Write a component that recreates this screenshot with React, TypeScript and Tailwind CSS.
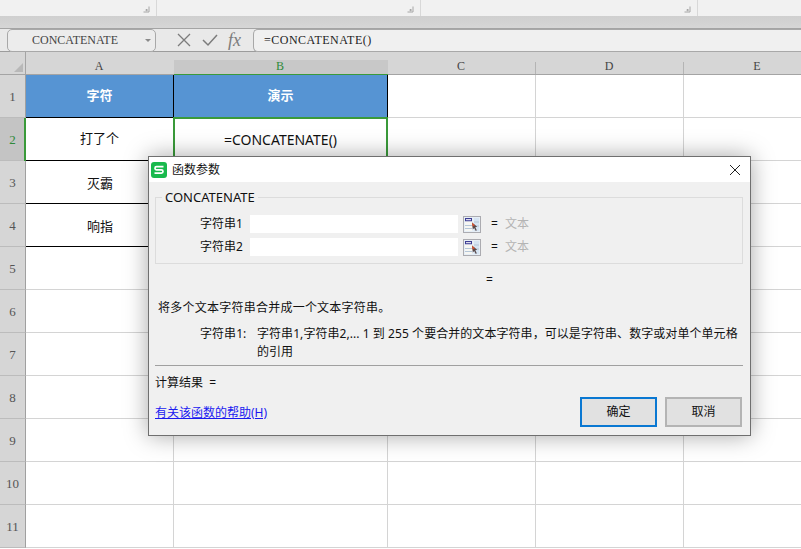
import React from "react";

const FONT = "font-['Noto_Sans','Noto_Sans_CJK_SC',sans-serif]";
const HEAD = "font-['Liberation_Serif','Noto_Sans_CJK_SC',serif]";

const columns = ["A", "B", "C", "D", "E"];
const rows = [1, 2, 3, 4, 5, 6, 7, 8, 9, 10, 11];

const CornerMark = () => (
  <svg width="7" height="7" viewBox="0 0 7 7" className="mb-[3px] mr-[6px]">
    <path d="M6 0.5V6H0.5M3 3.5h1.2v1.2H3z" fill="none" stroke="#a6a6a6" strokeWidth="1" />
  </svg>
);

const PickerIcon = () => (
  <svg width="18" height="17" viewBox="0 0 18 17">
    <rect x="0.5" y="0.5" width="17" height="16" fill="#e6eef6" stroke="#ababb0" />
    <path d="M11 2h5v13h-5z" fill="#d5e4f3" />
    <rect x="2" y="2" width="7" height="3.5" fill="#3d3d94" />
    <rect x="3" y="3.2" width="5" height="1" fill="#ffffff" />
    <path d="M2 5.5h7v9.5H2z" fill="#f6f6f2" />
    <path d="M2 9.5h7M2 12.5h7M11 6h5M11 10h5" stroke="#b4c6d8" strokeWidth="1" />
    <path d="M9 6.5l.8 7 1.4-1.6 1.6 3 1-.6-1.5-3 1.9-.5z" fill="#5a4a4a" />
    <path d="M9 6.5l.5 4 2.5-1.3z" fill="#d8512f" />
  </svg>
);

const ArgRow = ({ label }: { label: string }) => (
  <div className="flex h-[18px] items-center">
    <div className="w-[94px] pl-[44px] text-[12px] leading-none text-[#111]">{label}</div>
    <div className="h-[18px] w-[208px] bg-white" />
    <div className="ml-[5px] flex h-[18px] w-[18px] items-center"><PickerIcon /></div>
    <div className="ml-[10px] w-[14px] text-[12px] leading-none text-[#111]">=</div>
    <div className="text-[12px] leading-none text-[#b4b4b4]">文本</div>
  </div>
);

const Dialog = () => (
  <div className={`absolute left-[148px] top-[156px] h-[280px] w-[603px] border border-[#6f6f6f] bg-[#f0f0f0] shadow-[0_0_22px_rgba(0,0,0,0.35)] ${FONT}`}>
    <div className="flex h-[25px] items-center justify-between bg-white pl-[2px] pr-[9px]">
      <div className="flex items-center gap-[5px]">
        <svg width="16" height="16" viewBox="0 0 16 16">
          <rect width="16" height="16" rx="3" fill="#19b94d" />
          <path d="M12.5 4.7H5.6a1.6 1.6 0 0 0 0 3.2h4.8a1.6 1.6 0 0 1 0 3.2H3.5" fill="none" stroke="#fff" strokeWidth="1.7" />
        </svg>
        <span className="text-[12px] leading-none text-[#111]">函数参数</span>
      </div>
      <svg width="12" height="12" viewBox="0 0 12 12">
        <path d="M1 1l10 10M11 1L1 11" stroke="#222" strokeWidth="1" />
      </svg>
    </div>

    <div className="px-[6px]">
      <div className="relative mt-[15px] h-[67px] w-[588px] border border-[#dcdcdc] pt-[17px]">
        <span className="absolute left-[6px] top-[-8px] bg-[#f0f0f0] px-[3px] text-[13px] leading-[14px] text-[#111]">CONCATENATE</span>
        <div className="flex flex-col gap-[5px]">
          <ArgRow label="字符串1" />
          <ArgRow label="字符串2" />
        </div>
      </div>

      <div className="mt-[9px] pl-[331px] text-[12px] leading-[14px] text-[#111]">=</div>
      <div className="mt-[14px] pl-[3px] text-[12px] leading-[14px] tracking-[0.02em] text-[#111]">将多个文本字符串合并成一个文本字符串。</div>

      <div className="mt-[10px] flex text-[12px] leading-[18px] tracking-[0.06px] text-[#111]">
        <div className="w-[102px] shrink-0 pl-[45px]">字符串1:</div>
        <div className="w-[484px]">字符串1,字符串2,... 1 到 255 个要合并的文本字符串，可以是字符串、数字或对单个单元格的引用</div>
      </div>

      <div className="mt-[4px] h-px w-[588px] bg-[#a0a0a0]" />
      <div className="mt-[10px] text-[12px] leading-[14px] text-[#111]">计算结果 &nbsp;=</div>

      <div className="mt-[7px] flex w-[587px] items-center justify-between">
        <a className="mt-[1px] text-[12px] leading-[14px] text-[#1a1af0] underline">有关该函数的帮助(H)</a>
        <div className="flex gap-[8px]">
          <div className="flex h-[30px] w-[77px] items-center justify-center border-2 border-[#0a78d2] bg-[#e1e1e1] text-[12px] text-[#111]">确定</div>
          <div className="flex h-[30px] w-[77px] items-center justify-center border-2 border-[#b4b4b4] bg-[#e1e1e1] text-[12px] text-[#111]">取消</div>
        </div>
      </div>
    </div>
  </div>
);

const cellText: Record<string, string> = {
  A1: "字符",
  B1: "演示",
  A2: "打了个",
  A3: "灭霸",
  A4: "响指",
  B2: "=CONCATENATE()",
};

const cellClass = (col: string, row: number) => {
  if (row === 1 && (col === "A" || col === "B")) {
    return "bg-[#5694d3] font-bold text-white border-b border-r border-black";
  }
  if (col === "B" && row === 2) return "bg-white border-2 border-[#3a9a3a] -mt-px -ml-px relative text-[14px] text-[#111]";
  if (col === "A" && row === 2) return "bg-white border-b border-r border-black text-[#111] shadow-[-2px_0_0_#3a9a3a]";
  if (col === "A" && (row === 3 || row === 4)) return "bg-white border-b border-black pt-[3px] text-[#111]";
  return "bg-white border-b border-r border-[#d4d4d4]";
};

export default function App() {
  return (
    <div className={`relative h-[549px] w-[801px] overflow-hidden bg-white ${FONT}`}>
      <div className="flex h-[16px] bg-[#f1f1f1]">
        <div className="flex w-[157px] items-end justify-end border-r border-[#d8d8d8]"><CornerMark /></div>
        <div className="flex w-[264px] items-end justify-end border-r border-[#d8d8d8]"><CornerMark /></div>
        <div className="flex w-[277px] items-end justify-end border-r border-[#d8d8d8]"><CornerMark /></div>
      </div>
      <div className="h-[13px] border-b border-[#a4a4a4] bg-gradient-to-b from-[#cfcfcf] to-[#d6d6d6]" />

      <div className="flex h-[23px] items-center border-b border-[#9c9c9c] bg-[#e9e9e9] pl-[7px]">
        <div className={`relative flex h-[23px] w-[149px] items-center rounded-[5px] border border-[#a8a8a8] bg-[#ececec] pl-[24px] text-[12px] text-[#444] ${HEAD}`}>
          CONCATENATE
          <span className="absolute right-[4px] top-[9px] h-0 w-0 border-x-[3px] border-t-[3px] border-x-transparent border-t-[#8a8a8a]" />
        </div>
        <svg width="14" height="14" viewBox="0 0 14 14" className="ml-[21px]">
          <path d="M1 1l12 12M13 1L1 13" stroke="#7c7c7c" strokeWidth="1.3" />
        </svg>
        <svg width="16" height="14" viewBox="0 0 16 14" className="ml-[11px]">
          <path d="M1 7l5 5L15 2" fill="none" stroke="#7c7c7c" strokeWidth="1.5" />
        </svg>
        <span className="ml-[10px] w-[25px] font-['Liberation_Serif',serif] text-[18px] italic leading-none text-[#7c7c7c]">fx</span>
        <div className={`flex h-[23px] flex-1 items-center rounded-l-[5px] border border-r-0 border-[#a8a8a8] bg-[#f0f0f0] pl-[10px] text-[12px] tracking-[0.5px] text-[#222] ${HEAD}`}>
          =CONCATENATE()
        </div>
      </div>

      <div className="grid grid-cols-[26px_148px_214px_148px_148px_148px] grid-rows-[23px_repeat(11,43px)]">
        <div className="relative border-b border-r border-[#a4a4a4] bg-[#d6d6d6]">
          <span className="absolute bottom-[2px] right-[2px] h-0 w-0 border-b-[9px] border-l-[9px] border-b-[#b8b8b8] border-l-transparent" />
        </div>
        {columns.map((c) => (
          <div key={c} className={`relative flex items-end justify-center border-b pb-[1px] pr-[2px] ${c === "B" ? "border-[#3a9a3a]" : "border-[#a4a4a4]"} bg-[#d6d6d6] text-[12px] leading-[14px] ${HEAD} ${c === "B" ? "text-[#2f8a3a]" : "text-[#444]"}`}>
            {c === "B" && <span className="absolute inset-x-0 bottom-0 top-[8px] bg-[#c8c8c8]" />}
            <span className="relative">{c}</span>
            {c !== "B" && c !== "A" && <span className="absolute bottom-0 right-0 top-[10px] w-px bg-[#b4b4b4]" />}
          </div>
        ))}
        {rows.map((r) => (
          <React.Fragment key={r}>
            <div className={`flex items-center justify-center border-b border-r border-b-[#bcbcbc] border-r-[#a0a0a0] pt-[2px] text-[13px] ${HEAD} ${r === 2 ? "bg-[#c4c4c4] text-[#2f8a3a]" : "bg-[#d6d6d6] text-[#555]"}`}>{r}</div>
            {columns.map((c) => (
              <div key={c} className={`flex items-center justify-center text-[13px] ${cellClass(c, r)}`}>
                {cellText[c + r]}
              </div>
            ))}
          </React.Fragment>
        ))}
      </div>

      <Dialog />
    </div>
  );
}
